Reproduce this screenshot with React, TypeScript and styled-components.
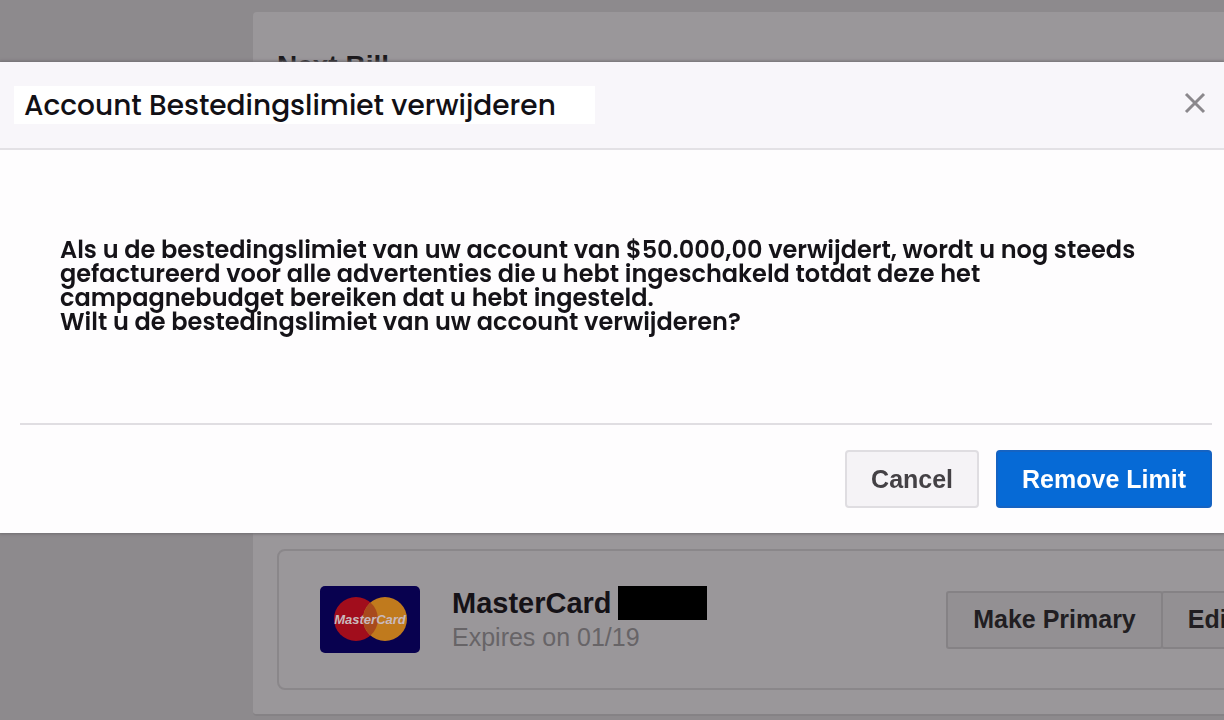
import React from "react";
import styled, { createGlobalStyle } from "styled-components";

const GlobalStyle = createGlobalStyle`
  * { box-sizing: border-box; }
  body {
    margin: 0;
    background: #8d8a8d;
    font-family: "Liberation Sans", Arial, sans-serif;
  }
  h1, h2, h3, p { margin: 0; }
  button { font-family: inherit; cursor: pointer; }
`;

const Page = styled.main`
  display: flex;
  flex-direction: column;
  min-height: 100vh;
  padding: 12px 0 4px 253px;
  overflow: hidden;
`;

const Panel = styled.section`
  flex: 1;
  display: flex;
  flex-direction: column;
  justify-content: space-between;
  margin-right: -64px;
  padding: 38px 24px 24px;
  background: #9a979a;
  border-bottom: 2px solid #858285;
  border-radius: 4px;
`;

const PanelTitle = styled.h2`
  font-size: 28px;
  line-height: 32px;
  color: #1b191c;
`;

const PaymentMethod = styled.article`
  display: flex;
  align-items: center;
  height: 141px;
  padding: 0 0 0 41px;
  border: 2px solid #8a878a;
  border-radius: 8px;
`;

const CardLogo = styled.svg`
  width: 100px;
  height: 67px;
  margin-right: 32px;
`;

const CardInfo = styled.div`
  flex: 1;
`;

const CardName = styled.h3`
  display: flex;
  align-items: center;
  gap: 6px;
  font-size: 29px;
  line-height: 34px;
  color: #151217;
`;

const HiddenNumber = styled.span`
  width: 89px;
  height: 34px;
  background: #000;
`;

const Expiry = styled.p`
  font-size: 25px;
  line-height: 34px;
  color: #676467;
`;

const ButtonGroup = styled.div`
  display: flex;
`;

const GroupButton = styled.button`
  height: 58px;
  margin-left: -2px;
  padding: 0 25px;
  border: 2px solid #858285;
  border-radius: 3px;
  background: #939093;
  color: #211e22;
  font-size: 25px;
  font-weight: 700;
`;

const Dialog = styled.section`
  position: fixed;
  top: 62px;
  left: 0;
  right: 0;
  background: #fefdfe;
  box-shadow: 0 0 3px 1px #6f6c70;
`;

const DialogHeader = styled.header`
  display: flex;
  align-items: center;
  justify-content: space-between;
  height: 88px;
  padding: 0 14px 4px;
  background: #f8f6fa;
  border-bottom: 2px solid #e3e1e5;
`;

const DialogTitle = styled.h1`
  padding: 2px 39px 0 10px;
  background: #fff;
  font-family: Poppins, Inter, sans-serif;
  font-size: 28px;
  font-weight: 500;
  line-height: 36px;
  margin-top: 4px;
  color: #121015;
`;

const CloseButton = styled.button`
  display: flex;
  padding: 4px;
  border: 0;
  background: none;
  color: #8b888c;
`;

const DialogBody = styled.div`
  height: 273px;
  padding: 88px 60px 0;
  font-family: Poppins, Inter, sans-serif;
  font-size: 24px;
  font-weight: 600;
  line-height: 24px;
  color: #151318;
`;

const DialogFooter = styled.footer`
  display: flex;
  justify-content: flex-end;
  gap: 17px;
  margin: 0 12px 0 20px;
  padding: 25px 0;
  border-top: 2px solid #e0dee2;
`;

const ActionButton = styled.button<{ $primary?: boolean }>`
  height: 58px;
  padding: 0 24px;
  border: 2px solid ${(p) => (p.$primary ? "#1563c2" : "#dfdde1")};
  border-radius: 4px;
  background: ${(p) => (p.$primary ? "#066ad6" : "#f5f3f6")};
  color: ${(p) => (p.$primary ? "#fff" : "#444145")};
  font-size: 25px;
  font-weight: 700;
`;

function MasterCardLogo() {
  return (
    <CardLogo viewBox="0 0 100 67" role="img" aria-label="MasterCard">
      <rect width="100" height="67" rx="5" fill="#08014f" />
      <circle cx="36" cy="33" r="22" fill="#a10d1c" />
      <circle cx="65" cy="33" r="22" fill="#c07a1d" />
      <path d="M50.500 16.500a22 22 0 0 1 0 33a22 22 0 0 1 0-33" fill="#a84a1c" />
      <text
        x="50"
        y="38"
        textAnchor="middle"
        fontFamily="Liberation Sans, Arial, sans-serif"
        fontSize="13"
        fontWeight="700"
        fontStyle="italic"
        fill="#c9b9bd"
      >
        MasterCard
      </text>
    </CardLogo>
  );
}

export default function App() {
  return (
    <>
      <GlobalStyle />
      <Page>
        <Panel>
          <PanelTitle>Next Bill</PanelTitle>
          <PaymentMethod>
            <MasterCardLogo />
            <CardInfo>
              <CardName>
                MasterCard <HiddenNumber />
              </CardName>
              <Expiry>Expires on 01/19</Expiry>
            </CardInfo>
            <ButtonGroup>
              <GroupButton type="button">Make Primary</GroupButton>
              <GroupButton type="button">Edit</GroupButton>
            </ButtonGroup>
          </PaymentMethod>
        </Panel>
      </Page>
      <Dialog role="dialog" aria-modal="true" aria-labelledby="dialog-title">
        <DialogHeader>
          <DialogTitle id="dialog-title">Account Bestedingslimiet verwijderen</DialogTitle>
          <CloseButton type="button" aria-label="Close">
            <svg width="22" height="22" viewBox="0 0 22 22" fill="none" stroke="currentColor" strokeWidth="3">
              <path d="M2 2l18 18M20 2L2 20" />
            </svg>
          </CloseButton>
        </DialogHeader>
        <DialogBody>
          <p>
            Als u de bestedingslimiet van uw account van $50.000,00 verwijdert, wordt u nog steeds
            gefactureerd voor alle advertenties die u hebt ingeschakeld totdat deze het
            campagnebudget bereiken dat u hebt ingesteld.
          </p>
          <p>Wilt u de bestedingslimiet van uw account verwijderen?</p>
        </DialogBody>
        <DialogFooter>
          <ActionButton type="button">Cancel</ActionButton>
          <ActionButton type="button" $primary>
            Remove Limit
          </ActionButton>
        </DialogFooter>
      </Dialog>
    </>
  );
}
